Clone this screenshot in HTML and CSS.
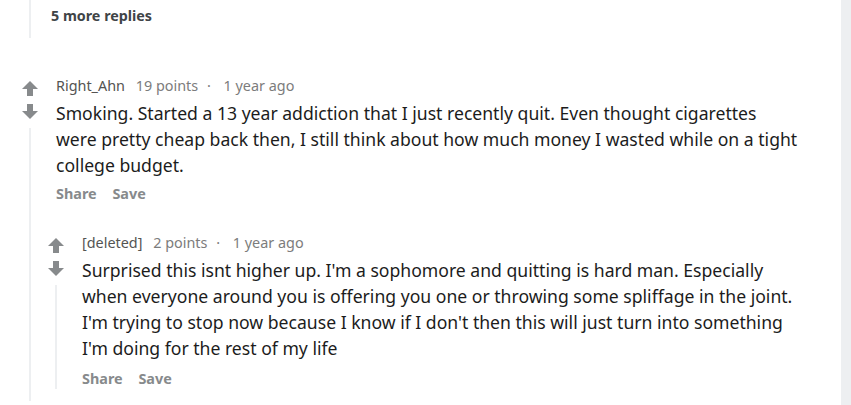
FILE: index.html
```html
<!DOCTYPE html>
<html>
<head>
    <title>Comments</title>
    <link rel="stylesheet" href="styles.css">
</head>
<body>
    <div class="page">
        <div class="more-replies">
            <a href="#">5 more replies</a>
        </div>

        <div class="comment">
            <div class="vote">
                <svg class="arrow" viewBox="0 0 16 15"><polygon points="8,0 0,8 5,8 5,15 11,15 11,8 16,8"/></svg>
                <svg class="arrow down" viewBox="0 0 16 15"><polygon points="8,15 0,7 5,7 5,0 11,0 11,7 16,7"/></svg>
                <div class="threadline"></div>
            </div>
            <div class="entry">
                <div class="meta">
                    <span class="author">Right_Ahn</span>
                    <span class="score">19 points</span>
                    <span class="dot">&middot;</span>
                    <span class="time">1 year ago</span>
                </div>
                <p class="text">Smoking. Started a 13 year addiction that I just recently quit. Even thought cigarettes were pretty cheap back then, I still think about how much money I wasted while on a tight college budget.</p>
                <div class="actions">
                    <a href="#">Share</a>
                    <a href="#">Save</a>
                </div>

                <div class="children">
                    <div class="comment">
                        <div class="vote">
                            <svg class="arrow" viewBox="0 0 16 15"><polygon points="8,0 0,8 5,8 5,15 11,15 11,8 16,8"/></svg>
                            <svg class="arrow down" viewBox="0 0 16 15"><polygon points="8,15 0,7 5,7 5,0 11,0 11,7 16,7"/></svg>
                            <div class="threadline"></div>
                        </div>
                        <div class="entry">
                            <div class="meta">
                                <span class="author">[deleted]</span>
                                <span class="score">2 points</span>
                                <span class="dot">&middot;</span>
                                <span class="time">1 year ago</span>
                            </div>
                            <p class="text">Surprised this isnt higher up. I'm a sophomore and quitting is hard man. Especially when everyone around you is offering you one or throwing some spliffage in the joint. I'm trying to stop now because I know if I don't then this will just turn into something I'm doing for the rest of my life</p>
                            <div class="actions">
                                <a href="#">Share</a>
                                <a href="#">Save</a>
                            </div>
                        </div>
                    </div>
                </div>
            </div>
        </div>
    </div>
</body>
</html>
```
FILE: styles.css
```css
body {
    margin: 0;
    padding: 0;
    background: #edeff1;
    font-family: "Noto Sans", "DejaVu Sans", sans-serif;
    overflow: hidden;
}
a {
    text-decoration: none;
}
.page {
    background: #fff;
    width: 841px;
    height: 405px;
    box-sizing: border-box;
    padding-right: 43px;
}
.more-replies {
    margin-left: 29px;
    height: 38px;
    box-sizing: border-box;
    padding: 6px 0 0 20px;
    border-left: 2px solid #edeff1;
    font-size: 14.3px;
    line-height: 20px;
    font-weight: bold;
}
.more-replies a {
    color: #3f4447;
}
.comment {
    display: flex;
    margin-left: 18px;
    margin-top: 38px;
    padding-bottom: 12px;
}
.vote {
    width: 24px;
    flex: none;
    display: flex;
    flex-direction: column;
    align-items: center;
    padding-top: 5px;
}
.arrow {
    width: 16px;
    height: 15px;
    fill: #878a8c;
    display: block;
}
.arrow.down {
    margin-top: 8px;
}
.threadline {
    flex: 1;
    width: 2px;
    margin-top: 9px;
    background: #edeff1;
}
.entry {
    flex: 1;
    margin-left: 14px;
}
.meta {
    font-size: 14.4px;
    line-height: 20px;
    color: #7c7c7c;
}
.meta .author {
    color: #545452;
    margin-right: 7px;
}
.meta .dot {
    margin: 0 9px 0 5px;
}
.text {
    margin: 4px 0 0 0;
    font-size: 17.6px;
    line-height: 26px;
    color: #1c1c1c;
}
.actions {
    margin-top: 6px;
    font-size: 14.4px;
    line-height: 20px;
    font-weight: bold;
}
.actions a {
    color: #878a8c;
    margin-right: 12px;
}
.children {
    margin: 29px 0 0 -12px;
}
.children .comment {
    margin: 0;
    padding-bottom: 12px;
}
.children .actions {
    margin-top: 8px;
}
```
